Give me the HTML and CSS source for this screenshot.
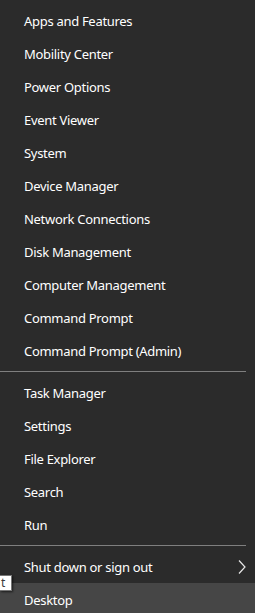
FILE: index.html
```html
<!DOCTYPE html>
<html lang="en">
<head>
    <meta charset="UTF-8">
    <title>Quick Link Menu</title>
    <link rel="stylesheet" href="styles.css">
</head>
<body>
    <nav class="menu">
        <ul class="menu-group">
            <li class="menu-item">Apps and Features</li>
            <li class="menu-item">Mobility Center</li>
            <li class="menu-item">Power Options</li>
            <li class="menu-item">Event Viewer</li>
            <li class="menu-item">System</li>
            <li class="menu-item">Device Manager</li>
            <li class="menu-item">Network Connections</li>
            <li class="menu-item">Disk Management</li>
            <li class="menu-item">Computer Management</li>
            <li class="menu-item">Command Prompt</li>
            <li class="menu-item">Command Prompt (Admin)</li>
        </ul>
        <hr class="menu-separator">
        <ul class="menu-group">
            <li class="menu-item">Task Manager</li>
            <li class="menu-item">Settings</li>
            <li class="menu-item">File Explorer</li>
            <li class="menu-item">Search</li>
            <li class="menu-item">Run</li>
        </ul>
        <hr class="menu-separator">
        <ul class="menu-group">
            <li class="menu-item has-sub">
                Shut down or sign out
                <svg class="chevron" width="8" height="14" viewBox="0 0 8 14">
                    <path d="M1 0.5 L7 7 L1 13.5" fill="none" stroke="#e8e8e8" stroke-width="1.2"/>
                </svg>
            </li>
            <li class="menu-item active">Desktop</li>
        </ul>
    </nav>
    <div class="tooltip">t</div>
</body>
</html>
```

FILE: styles.css
```css
* {
    margin: 0;
    padding: 0;
    box-sizing: border-box;
}

html, body {
    height: 100%;
}

body {
    background-color: #2b2b2b;
    color: #ffffff;
    font-family: "Noto Sans", sans-serif;
    font-size: 13px;
    letter-spacing: -0.3px;
    overflow: hidden;
}

.menu {
    padding-top: 4px;
}

.menu-group {
    list-style: none;
}

.menu-item {
    display: flex;
    align-items: center;
    justify-content: space-between;
    height: 33px;
    padding: 0 9px 0 24px;
    white-space: nowrap;
}

.menu-item.active {
    background-color: #464646;
}

.chevron {
    display: block;
}

.menu-separator {
    border: none;
    height: 1px;
    background-color: #7f7f7f;
    margin: 4px 9px 4px 0;
}

/* clipped tooltip peeking from the left edge */
.tooltip {
    position: absolute;
    left: 0;
    top: 575px;
    width: 12px;
    height: 16px;
    padding-left: 1px;
    background-color: #ffffff;
    color: #3a3a3a;
    border: 1px solid #767676;
    border-left: none;
    font-size: 12px;
    line-height: 14px;
    letter-spacing: 0;
    box-shadow: 1px 1px 2px rgba(0, 0, 0, 0.6);
}
```
